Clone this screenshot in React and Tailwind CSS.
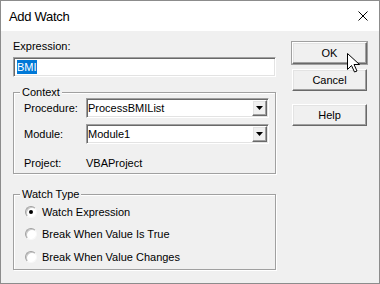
import React from 'react'

const sunken =
  'border border-t-[#a0a0a0] border-l-[#a0a0a0] border-b-white border-r-white shadow-[inset_1px_1px_0_#696969,inset_-1px_-1px_0_#e3e3e3]'
const raised =
  'border border-t-white border-l-white border-b-[#696969] border-r-[#696969] shadow-[inset_-1px_-1px_0_#a0a0a0,inset_1px_1px_0_#e3e3e3] bg-[#f0f0f0]'
const etched = 'border border-[#a0a0a0] shadow-[inset_1px_1px_0_#fff,1px_1px_0_#fff]'

function Combo({ value }) {
  return (
    <div className={`flex h-[20px] w-[183px] items-center bg-white ${sunken}`}>
      <span className="flex-1 pl-[1px] leading-[16px]">{value}</span>
      <div className={`mr-[1px] flex h-[16px] w-[15px] items-center justify-center ${raised}`}>
        <svg width="7" height="4" viewBox="0 0 7 4">
          <path d="M0 0h7L3.5 4z" fill="#000" />
        </svg>
      </div>
    </div>
  )
}

function Button({ label, isDefault }) {
  return (
    <div
      className={`flex h-[22px] w-[75px] items-center justify-center ${
        isDefault ? 'outline outline-1 outline-[#a0a0a0]' : ''
      } ${raised}`}
    >
      {label}
    </div>
  )
}

function Radio({ label, checked, className = '' }) {
  return (
    <div className={`flex h-[22px] items-center pl-[11px] ${className}`}>
      <div className="flex h-[12px] w-[12px] items-center justify-center rounded-full border border-t-[#a0a0a0] border-l-[#a0a0a0] border-b-[#f8f8f8] border-r-[#f8f8f8] bg-white shadow-[inset_1px_1px_0_#c8c8c8]">
        {checked && <div className="h-[4px] w-[4px] rounded-full bg-black" />}
      </div>
      <span className="ml-[5px]">{label}</span>
    </div>
  )
}

export default function App() {
  return (
    <div className="relative flex h-[284px] w-[380px] flex-col border border-[#8c8c8c] bg-[#f0f0f0] font-['Liberation_Sans',Arial,sans-serif] text-[11px] leading-[13px] text-black">
      {/* Title bar */}
      <div className="flex h-[30px] items-center justify-between bg-white pl-[8px] pr-[11px]">
        <span className="text-[13px] tracking-[-0.3px]">Add Watch</span>
        <svg width="10" height="10" viewBox="0 0 10 10">
          <path d="M0.5 0.5l9 9M9.5 0.5l-9 9" stroke="#000" strokeWidth="1" />
        </svg>
      </div>

      <div className="flex flex-1 pl-[12px]">
        {/* Left column */}
        <div className="flex w-[263px] flex-col pt-[9px]">
          <div>Expression:</div>
          <div className={`mt-[4px] flex h-[20px] items-center bg-white pl-[3px] ${sunken}`}>
            <span className="bg-[#0078d7] leading-[14px] text-white">BMI</span>
          </div>

          <fieldset className={`mt-[9px] min-w-0 p-0 pb-[3px] ${etched}`}>
            <legend className="ml-[6px] bg-[#f0f0f0] px-[2px] leading-[12px]">Context</legend>
            <div className="flex flex-col pl-[10px]">
              <div className="flex items-center">
                <span className="w-[62px]">Procedure:</span>
                <Combo value="ProcessBMIList" />
              </div>
              <div className="mt-[6px] flex items-center">
                <span className="w-[62px]">Module:</span>
                <Combo value="Module1" />
              </div>
              <div className="mt-[13px] flex items-center">
                <span className="w-[62px]">Project:</span>
                <span>VBAProject</span>
              </div>
            </div>
          </fieldset>

          <fieldset className={`mt-[14px] min-w-0 p-0 pt-[1px] pb-[1px] ${etched}`}>
            <legend className="ml-[6px] bg-[#f0f0f0] px-[2px] leading-[12px]">Watch Type</legend>
            <Radio label="Watch Expression" checked />
            <Radio label="Break When Value Is True" />
            <Radio label="Break When Value Changes" className="mt-[1px]" />
          </fieldset>
        </div>

        {/* Right column */}
        <div className="ml-[16px] flex flex-col pt-[11px]">
          <Button label="OK" isDefault />
          <div className="mt-[5px]">
            <Button label="Cancel" />
          </div>
          <div className="mt-[13px]">
            <Button label="Help" />
          </div>
        </div>
      </div>

      {/* Mouse pointer */}
      <svg
        className="absolute left-[346px] top-[52px]"
        width="13"
        height="20"
        viewBox="0 0 13 20"
      >
        <path
          d="M0.5 0.5v16l4-4 3 6.5 2.5-1-3-6.5h5.5z"
          fill="#fff"
          stroke="#000"
          strokeWidth="1"
          strokeLinejoin="miter"
        />
      </svg>
    </div>
  )
}
